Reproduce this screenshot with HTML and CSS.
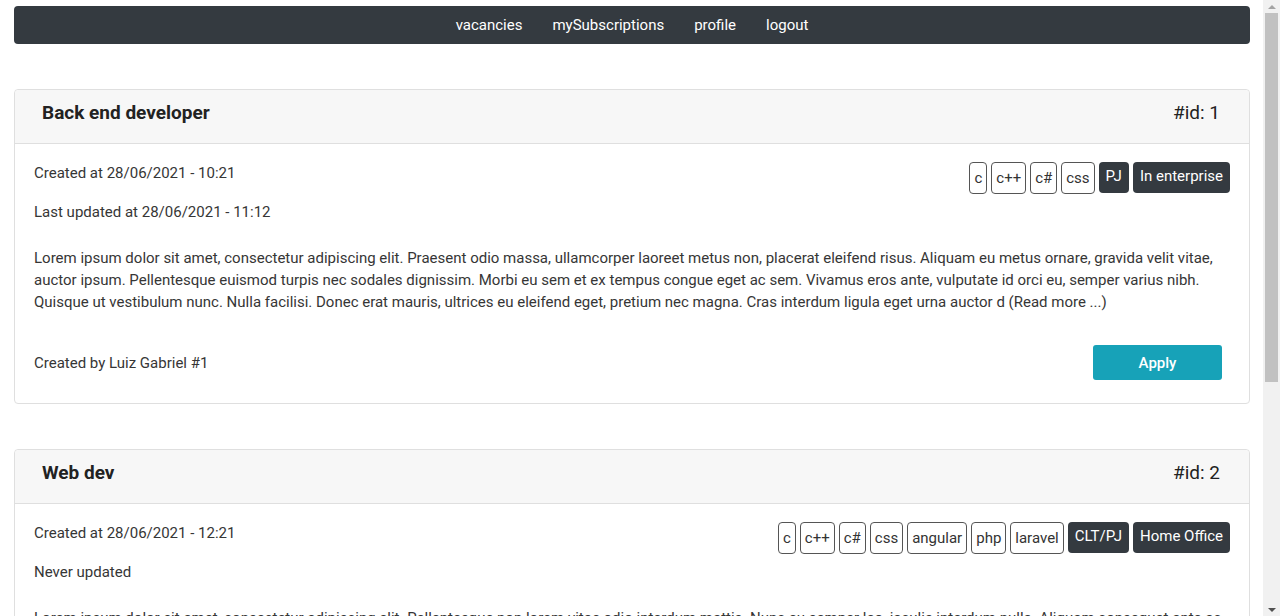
FILE: index.html
```html
<!DOCTYPE html>
<html lang="en">
<head>
<meta charset="utf-8">
<title>Vacancies</title>
<link rel="stylesheet" href="styles.css">
</head>
<body>
<div class="frame">
  <div class="viewport">
    <nav class="navbar">
      <a href="#">vacancies</a>
      <a href="#">mySubscriptions</a>
      <a href="#">profile</a>
      <a href="#">logout</a>
    </nav>

    <section class="card">
      <header class="card-header">
        <h5 class="title">Back end developer</h5>
        <span class="card-id">#id: 1</span>
      </header>
      <div class="card-body">
        <div class="meta-row">
          <div class="dates">
            <p>Created at 28/06/2021 - 10:21</p>
            <p>Last updated at 28/06/2021 - 11:12</p>
          </div>
          <div class="badges">
            <span class="badge outline">c</span>
            <span class="badge outline">c++</span>
            <span class="badge outline">c#</span>
            <span class="badge outline">css</span>
            <span class="badge dark">PJ</span>
            <span class="badge dark">In enterprise</span>
          </div>
        </div>
        <p class="desc">Lorem ipsum dolor sit amet, consectetur adipiscing elit. Praesent odio massa, ullamcorper laoreet metus non, placerat eleifend risus. Aliquam eu metus ornare, gravida velit vitae, auctor ipsum. Pellentesque euismod turpis nec sodales dignissim. Morbi eu sem et ex tempus congue eget ac sem. Vivamus eros ante, vulputate id orci eu, semper varius nibh. Quisque ut vestibulum nunc. Nulla facilisi. Donec erat mauris, ultrices eu eleifend eget, pretium nec magna. Cras interdum ligula eget urna auctor d (Read more ...)</p>
        <div class="footer-row">
          <span>Created by Luiz Gabriel #1</span>
          <button class="btn-apply" type="button">Apply</button>
        </div>
      </div>
    </section>

    <section class="card">
      <header class="card-header">
        <h5 class="title">Web dev</h5>
        <span class="card-id">#id: 2</span>
      </header>
      <div class="card-body">
        <div class="meta-row">
          <div class="dates">
            <p>Created at 28/06/2021 - 12:21</p>
            <p>Never updated</p>
          </div>
          <div class="badges">
            <span class="badge outline">c</span>
            <span class="badge outline">c++</span>
            <span class="badge outline">c#</span>
            <span class="badge outline">css</span>
            <span class="badge outline">angular</span>
            <span class="badge outline">php</span>
            <span class="badge outline">laravel</span>
            <span class="badge dark">CLT/PJ</span>
            <span class="badge dark">Home Office</span>
          </div>
        </div>
        <p class="desc">Lorem ipsum dolor sit amet, consectetur adipiscing elit. Pellentesque non lorem vitae odio interdum mattis. Nunc eu semper leo, iaculis interdum nulla. Aliquam consequat ante ac lectus tincidunt, vitae posuere nisl pharetra. Sed sit amet elit nec justo dignissim fermentum. (Read more ...)</p>
        <div class="footer-row">
          <span>Created by Luiz Gabriel #1</span>
          <button class="btn-apply" type="button">Apply</button>
        </div>
      </div>
    </section>
  </div>
  <div class="scrollbar">
    <div class="arrow up"></div>
    <div class="track"><div class="thumb"></div></div>
    <div class="arrow down"></div>
  </div>
</div>
</body>
</html>
```

FILE: styles.css
```css
* { box-sizing: border-box; }
html, body { margin: 0; padding: 0; height: 616px; overflow: hidden; }
body {
  font-family: Roboto, "Liberation Sans", sans-serif;
  font-size: 15px;
  line-height: 22px;
  color: #363636;
  background: #fff;
}
.frame { display: flex; height: 616px; }
.viewport {
  flex: 1;
  overflow: hidden;
  padding: 6px 13px 0 14px;
}
.navbar {
  height: 38px;
  background: #343a40;
  border-radius: 4px;
  display: flex;
  justify-content: center;
  align-items: center;
  gap: 30px;
}
.navbar a {
  color: #fff;
  text-decoration: none;
  font-size: 15px;
}
.card {
  margin-top: 45px;
  border: 1px solid #dfdfdf;
  border-radius: 4px;
  background: #fff;
}
.card-header {
  height: 54px;
  background: #f7f7f7;
  border-bottom: 1px solid #dfdfdf;
  display: flex;
  justify-content: space-between;
  align-items: center;
  padding: 0 29px 8px 27px;
  border-radius: 4px 4px 0 0;
}
.title {
  margin: 0;
  font-size: 19px;
  font-weight: 700;
  color: #222;
}
.card-id {
  font-size: 19px;
  font-weight: 400;
  color: #222;
}
.card-body { padding: 18px 19px 23px 19px; }
.meta-row {
  display: flex;
  justify-content: space-between;
  align-items: flex-start;
}
.dates p { margin: 0 0 17px 0; }
.dates p:last-child { margin-bottom: 0; }
.badges { display: flex; gap: 4px; align-items: flex-start; }
.badge {
  display: inline-block;
  font-size: 15px;
  line-height: 22px;
  border-radius: 4px;
  white-space: nowrap;
}
.badge.outline {
  border: 1px solid #555;
  padding: 4px 4px;
  color: #333;
}
.badge.dark {
  background: #343a40;
  color: #fff;
  padding: 3px 7px 6px;
}
.desc { margin: 24px 0 0 0; }
.footer-row {
  margin-top: 32px;
  display: flex;
  justify-content: space-between;
  align-items: center;
  padding-right: 8px;
}
.btn-apply {
  width: 129px;
  height: 35px;
  border: none;
  border-radius: 3px;
  background: #17a2b8;
  color: #fff;
  font-family: Roboto, "Liberation Sans", sans-serif;
  font-size: 15px;
  font-weight: 500;
}
.scrollbar {
  width: 17px;
  background: #f1f1f1;
  display: flex;
  flex-direction: column;
}
.arrow { height: 13px; display: flex; justify-content: center; align-items: center; }
.arrow.up::before {
  content: "";
  border-left: 4px solid transparent;
  border-right: 4px solid transparent;
  border-bottom: 4px solid #a3a3a3;
}
.arrow.down::before {
  content: "";
  border-left: 4px solid transparent;
  border-right: 4px solid transparent;
  border-top: 4px solid #505050;
}
.track { flex: 1; padding: 0 2px; }
.thumb { height: 369px; background: #c1c1c1; }
```
